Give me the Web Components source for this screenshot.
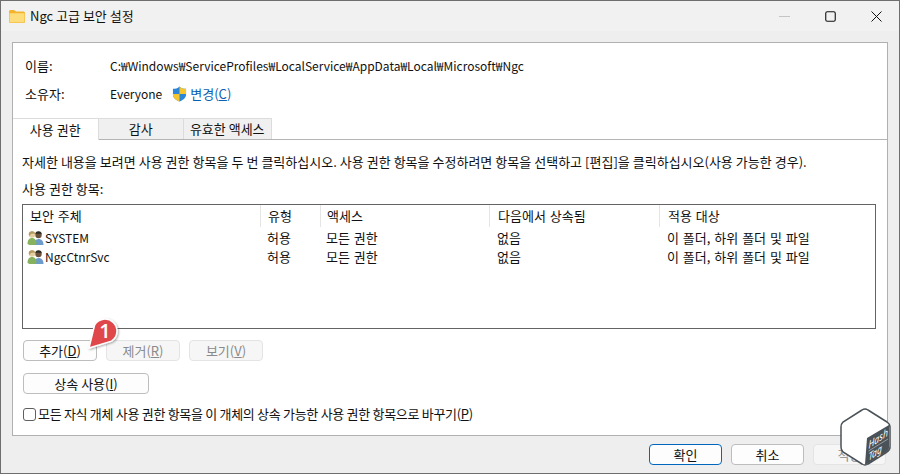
<!DOCTYPE html>
<html><head><meta charset="utf-8">
<style>
html,body{margin:0;padding:0;background:#eee;}
body{font:13px/16px "Noto Sans CJK KR","Noto Sans",sans-serif;color:#111;}
</style></head><body>
<win-dialog>
  <span slot="title">Ngc 고급 보안 설정</span>
  <info-row label="이름:">C:₩Windows₩ServiceProfiles₩LocalService₩AppData₩Local₩Microsoft₩Ngc</info-row>
  <info-row label="소유자:" owner>Everyone</info-row>
  <tab-strip></tab-strip>
  <perm-list></perm-list>
</win-dialog>
<script>
function def(name, html, init){
  customElements.define(name, class extends HTMLElement{
    constructor(){super();const r=this.attachShadow({mode:'open'});r.innerHTML=typeof html==='function'?html(this):html;}
    connectedCallback(){ if(init) init(this); }
  });
}
const FONT='"Noto Sans CJK KR","Noto Sans",sans-serif';
const USERS=`<svg width="17" height="15" viewBox="0 0 17 15"><path d="M7 15c.3-4 1.600-6 4.500-6S16.500 11 16.500 15z" fill="#6d9ccb"/><circle cx="11.500" cy="5" r="3.200" fill="#6a523e"/><path d="M8.300 4.500a3.200 3.200 0 0 1 6.400 0l-1.200-.8h-4z" fill="#2c2a28"/><path d="M.5 14c0-4 1.800-6 4.500-6s4.500 2 4.500 6l-2 1H2.500z" fill="#86b25e"/><circle cx="5" cy="4.500" r="3.200" fill="#e3cf9f"/><path d="M1.800 5a3.200 3.200 0 0 1 6.400-1l-1.500-.6-3 .6-.8 2z" fill="#b39a62"/></svg>`;

def('ui-button',`<style>
:host{display:inline-flex;box-sizing:border-box;height:21px;width:var(--w,74px);align-items:center;justify-content:center;background:#fdfdfd;border:1px solid #bdbdbd;border-radius:4px;font-size:13px;color:#111;white-space:nowrap}
:host([disabled]){background:#f6f6f6;border-color:#e4e4e4;color:#8a8a8a}
:host([primary]){border:1.500px solid #0067c0}
</style><slot></slot>`);

def('info-row',(h)=>`<style>
:host{display:flex;height:28px;align-items:center;padding-left:12px;font-size:13px;color:#111}
.l{width:85px}
.v{font-size:12px}
.owner{display:inline-flex;align-items:center;margin-left:10px;color:#0a5fb4}
svg{margin-right:3px}
</style><span class="l">${h.getAttribute('label')}</span><span class="v"><slot></slot></span>${h.hasAttribute('owner')?`<span class="owner"><svg width="15" height="16" viewBox="0 0 16 17"><path d="M8 .5C6 2.500 3.500 3 1 3v6c0 3.500 3 6 7 7.500 4-1.500 7-4 7-7.500V3C12.500 3 10 2.500 8 .5z" fill="#2a86d8"/><path d="M8 .5C10 2.500 12.500 3 15 3v5.500H8z" fill="#f6c62f"/><path d="M8 8.500H1V9c0 3.500 3 6 7 7.500z" fill="#f6c62f"/></svg>변경(<u>C</u>)</span>`:''}`);

def('tab-strip',`<style>
:host{display:flex;height:22px;margin-top:10px;box-sizing:border-box;border-bottom:1px solid #b4b4b4;align-items:flex-start}
.t{box-sizing:border-box;width:85.500px;height:21px;display:flex;align-items:center;justify-content:center;background:#f0f0f0;border:1px solid #dcdcdc;border-left:0;border-bottom:0;color:#111;font-size:13px}
.t.on{height:22px;background:#fff;border-left:0;position:relative}
.t.w{width:87.500px}
</style><div class="t on">사용 권한</div><div class="t">감사</div><div class="t w">유효한 액세스</div>`);

def('perm-list',`<style>
:host{display:block;padding:14px 11px 0 9px}
p{margin:0;height:27px;line-height:16px;white-space:nowrap;color:#111;word-spacing:.1px}
.box{box-sizing:border-box;height:125px;border:1px solid #646464;margin-top:7px;background:#fff}
.row{display:grid;grid-template-columns:237px 60px 169px 170px 1fr;height:19px;align-items:center;word-spacing:1px}
.row>span{display:flex;align-items:center;white-space:nowrap;height:100%;box-sizing:border-box}
.row>span:nth-child(2){padding-left:7px}
.row>span:nth-child(3){padding-left:6px}
.row>span:nth-child(4){padding-left:8px}
.row>span:nth-child(5){padding-left:8px}
.head{height:22px;margin-bottom:1px}
.head>span:not(:first-child){border-left:1px solid #e5e5e5}
.head>span:first-child{padding-left:7px}
.row:not(.head)>span:first-child{padding-left:4px}
.lat{font-size:12px;margin-left:1px}
.btns{display:flex;gap:9px;margin:11px 0 0 1px}
.b2{margin:12px 0 0 1px;height:21px}
.chk{display:flex;align-items:center;margin:12px 0 0 1px;white-space:nowrap;color:#111;height:16px;letter-spacing:-.3px}
.cb{width:13px;height:13px;box-sizing:border-box;border:1px solid #5f5f5f;border-radius:3px;background:#fff;margin-right:2px}
</style>
<p>자세한 내용을 보려면 사용 권한 항목을 두 번 클릭하십시오. 사용 권한 항목을 수정하려면 항목을 선택하고 [편집]을 클릭하십시오(사용 가능한 경우).</p>
<p style="height:16px">사용 권한 항목:</p>
<div class="box">
 <div class="row head"><span>보안 주체</span><span>유형</span><span>액세스</span><span>다음에서 상속됨</span><span>적용 대상</span></div>
 <div class="row"><span>${USERS}<span class="lat">SYSTEM</span></span><span>허용</span><span>모든 권한</span><span>없음</span><span>이 폴더, 하위 폴더 및 파일</span></div>
 <div class="row"><span>${USERS}<span class="lat">NgcCtnrSvc</span></span><span>허용</span><span>모든 권한</span><span>없음</span><span>이 폴더, 하위 폴더 및 파일</span></div>
</div>
<div class="btns"><ui-button>추가(<u>D</u>)</ui-button><ui-button disabled>제거(<u>R</u>)</ui-button><ui-button disabled>보기(<u>V</u>)</ui-button></div>
<div class="b2"><ui-button style="--w:126px">상속 사용(<u>I</u>)</ui-button></div>
<div class="chk"><span class="cb"></span>모든 자식 개체 사용 권한 항목을 이 개체의 상속 가능한 사용 권한 항목으로 바꾸기(<u>P</u>)</div>`);

def('win-dialog',`<style>
:host{display:block;box-sizing:border-box;width:900px;height:474px;border:1px solid #6e6e6e;background:#eee;position:relative;overflow:hidden;font-family:${FONT}}
.title{height:30px;background:#f1f1f1;display:flex;align-items:center;padding:0 0 0 8px;font-size:13px;color:#111}
.title svg.f{margin-right:5px}
.sp{flex:1}
.ctl{width:46px;height:30px;display:flex;align-items:center;justify-content:center}
.panel{box-sizing:border-box;margin:11px 11px 0 11px;height:394px;background:#fff;border:1px solid #b0b0b0;padding:9px 0 0 0}
.foot{display:flex;justify-content:flex-end;gap:9px;padding:8px 13px 0 0}
.badge{position:absolute;left:75px;top:313px}
.logo{position:absolute;left:838px;top:405px}
</style>
<div class="title"><svg class="f" width="16" height="13" viewBox="0 0 16 13"><path d="M0 1.500A1.500 1.500 0 0 1 1.500 0h3.500L7 1.500h7.500A1.500 1.500 0 0 1 16 3v8.500A1.500 1.500 0 0 1 14.500 13h-13A1.500 1.500 0 0 1 0 11.500z" fill="#f3b32b"/><path d="M.5 3.200h15v8.300a1 1 0 0 1-1 1h-13a1 1 0 0 1-1-1z" fill="#fddc7c"/></svg><slot name="title"></slot><span class="sp"></span>
<span class="ctl"><svg width="11" height="1" viewBox="0 0 11 1"><rect width="11" height="1" fill="#c4c4c4"/></svg></span>
<span class="ctl"><svg width="11" height="11" viewBox="0 0 11 11"><rect x=".75" y=".75" width="9.500" height="9.500" rx="1.500" fill="none" stroke="#111" stroke-width="1.100"/></svg></span>
<span class="ctl"><svg width="11" height="11" viewBox="0 0 11 11"><path d="M.5.5l10 10M10.500.5l-10 10" stroke="#111" stroke-width="1"/></svg></span></div>
<div class="panel"><slot></slot></div>
<div class="foot"><ui-button primary style="--w:73px">확인</ui-button><ui-button style="--w:73px">취소</ui-button><ui-button disabled style="--w:73px">적용</ui-button></div>
<svg class="badge" width="46" height="42" viewBox="0 0 46 42"><defs><filter id="s" x="-30%" y="-30%" width="160%" height="160%"><feDropShadow dx="1" dy="1" stdDeviation="1.200" flood-color="#000" flood-opacity=".35"/></filter></defs><g filter="url(#s)"><path d="M13 34L18.600 11 A12 12 0 1 1 35.500 27.100z" fill="#e0474c" stroke="#fff" stroke-width="1.500" stroke-linejoin="round"/></g><text x="29" y="24" text-anchor="middle" font-size="20" font-weight="600" fill="#fff" font-family="Open Sans">1</text></svg>
<svg class="logo" width="54" height="62" viewBox="0 0 54 62"><path d="M23 4Q26 2 29 4L48 16Q51 18 51 21V41Q51 44 48 46L29 58Q26 60 23 58L4 46Q2 44 2 41V21Q2 18 4 16z" fill="#fff" stroke="#4a5257" stroke-width="1.500"/><path d="M28 32L50 19V42Q50 44 48 45.500L29 57.500Q27 59 26 58.500z" fill="#4a5257"/><text transform="matrix(.82 -.57 0 1 29.500 43)" font-size="10.500" font-style="italic" fill="#fff" font-family="Noto Sans">Hash</text><path d="M29.500 45L49 33" stroke="#c9cdd0" stroke-width=".6"/><text transform="matrix(.82 -.57 0 1 29.500 55)" font-size="10.500" font-style="italic" fill="#fff" font-family="Noto Sans">Tag</text></svg>`);
</script>
</body></html>
